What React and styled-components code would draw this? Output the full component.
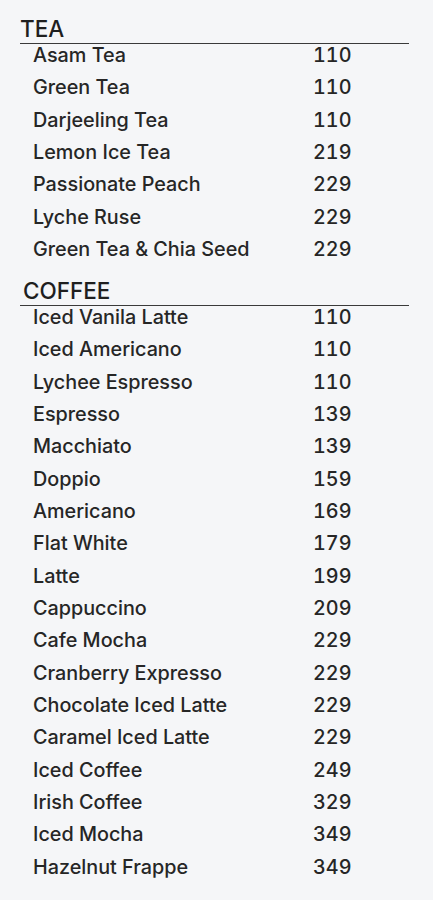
import React from "react";
import styled, { createGlobalStyle } from "styled-components";

const menu = [
  {
    title: "TEA",
    indent: 20,
    items: [
      ["Asam Tea", 110],
      ["Green Tea", 110],
      ["Darjeeling Tea", 110],
      ["Lemon Ice Tea", 219],
      ["Passionate Peach", 229],
      ["Lyche Ruse", 229],
      ["Green Tea & Chia Seed", 229],
    ],
  },
  {
    title: "COFFEE",
    indent: 23,
    items: [
      ["Iced Vanila Latte", 110],
      ["Iced Americano", 110],
      ["Lychee Espresso", 110],
      ["Espresso", 139],
      ["Macchiato", 139],
      ["Doppio", 159],
      ["Americano", 169],
      ["Flat White", 179],
      ["Latte", 199],
      ["Cappuccino", 209],
      ["Cafe Mocha", 229],
      ["Cranberry Expresso", 229],
      ["Chocolate Iced Latte", 229],
      ["Caramel Iced Latte", 229],
      ["Iced Coffee", 249],
      ["Irish Coffee", 329],
      ["Iced Mocha", 349],
      ["Hazelnut Frappe", 349],
    ],
  },
];

const GlobalStyle = createGlobalStyle`
  html, body {
    margin: 0;
    padding: 0;
    background: #f5f6f8;
  }
  body {
    font-family: Inter, "Open Sans", sans-serif;
    color: #262626;
  }
`;

const Page = styled.div`
  width: 433px;
  min-height: 900px;
  padding: 17px 24px 0 20px;
  box-sizing: border-box;
  display: flex;
  flex-direction: column;
  gap: 13.5px;
`;

const Section = styled.section`
  display: flex;
  flex-direction: column;
`;

const Heading = styled.h2`
  margin: 0;
  padding: 0 0 3px ${(p) => p.$indent - 20}px;
  font-size: 22.5px;
  line-height: 23px;
  font-weight: 500;
  color: #1f1f1f;
  border-bottom: 1.5px solid #3a3a3a;
`;

const ItemList = styled.ul`
  list-style: none;
  margin: -5px 0 0;
  padding: 0;
`;

const Item = styled.li`
  display: grid;
  grid-template-columns: 280px 1fr;
  padding-left: 13px;
  height: 32.35px;
  line-height: 32.35px;
  font-size: 19.8px;
  font-weight: 500;
`;

const Price = styled.span`
  font-variant-numeric: tabular-nums;
`;

export default function App() {
  return (
    <>
      <GlobalStyle />
      <Page>
        {menu.map((section) => (
          <Section key={section.title}>
            <Heading $indent={section.indent}>{section.title}</Heading>
            <ItemList>
              {section.items.map(([name, price]) => (
                <Item key={name}>
                  <span>{name}</span>
                  <Price>{price}</Price>
                </Item>
              ))}
            </ItemList>
          </Section>
        ))}
      </Page>
    </>
  );
}
